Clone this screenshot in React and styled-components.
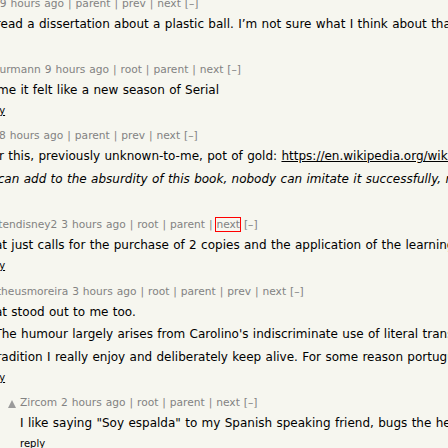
import React from "react";
import styled, { createGlobalStyle } from "styled-components";

const GlobalStyle = createGlobalStyle`
  html, body {
    margin: 0;
    padding: 0;
    width: 448px;
    height: 448px;
    overflow: hidden;
    background: #f6f6ef;
  }
  body {
    font-family: "DejaVu Sans", Verdana, "Noto Sans", sans-serif;
    word-spacing: 0.034em;
  }
`;

const Thread = styled.div`
  display: flex;
  flex-direction: column;
  margin: -3px 0 0 -116px;
`;

const CommentRow = styled.div`
  display: flex;
  align-items: flex-start;
  padding-left: ${(p) => p.$level * 40}px;
  padding-bottom: 9.5px;
  white-space: nowrap;
`;

const VoteCell = styled.div`
  flex: none;
  width: 16px;
  display: flex;
  justify-content: center;
  padding-top: 3px;
`;

const Content = styled.div`
  display: flex;
  flex-direction: column;
`;

const Comhead = styled.div`
  font-size: 8pt;
  line-height: 14px;
  height: 14px;
  color: #828282;
`;

const HeadLink = styled.a`
  color: #828282;
  text-decoration: none;
  outline: ${(p) => (p.$focused ? "1px solid #f00" : "none")};
`;

const CommText = styled.div`
  margin-top: 2px;
  font-size: 12px;
  line-height: 22.7px;
  color: #000;
`;

const Para = styled.div`
  font-style: ${(p) => (p.$italic ? "italic" : "normal")};
`;

const TextLink = styled.a`
  color: #000;
  text-decoration: underline;
`;

const Reply = styled.div`
  font-size: 10px;
  line-height: 18px;
  height: 18px;
`;

const ReplyLink = styled.a`
  color: #000;
  text-decoration: underline;
`;

const Arrow = () => (
  <svg width="10" height="10" viewBox="0 0 10 10" aria-hidden="true">
    <polygon points="5,1 9,9 1,9" fill="#9a9a9a" />
  </svg>
);

const comments = [
  {
    level: 1,
    user: "mikewarot",
    age: "9 hours ago",
    navs: ["parent", "prev", "next"],
    paras: [
      { text: "So I also read a dissertation about a plastic ball. I’m not sure what I think about that." },
    ],
  },
  {
    level: 2,
    user: "Schurmann",
    age: "9 hours ago",
    navs: ["root", "parent", "next"],
    paras: [{ text: "To me it felt like a new season of Serial" }],
  },
  {
    level: 1,
    user: "mikeweiss",
    age: "8 hours ago",
    navs: ["parent", "prev", "next"],
    paras: [
      {
        text: "Thanks for this, previously unknown-to-me, pot of gold: ",
        link: "https://en.wikipedia.org/wiki/English_as_She_Is_Spoke",
      },
      {
        italic: true,
        text: "“Nothing can add to the absurdity of this book, nobody can imitate it successfully, nobody can hope to equal it.”",
      },
    ],
  },
  {
    level: 2,
    user: "waltendisney2",
    age: "3 hours ago",
    navs: ["root", "parent", "next"],
    focused: "next",
    paras: [
      { text: "That just calls for the purchase of 2 copies and the application of the learnings therein." },
    ],
  },
  {
    level: 2,
    user: "matheusmoreira",
    age: "3 hours ago",
    navs: ["root", "parent", "prev", "next"],
    paras: [
      { text: "That stood out to me too." },
      { text: "> The humour largely arises from Carolino's indiscriminate use of literal translations of Portuguese idioms." },
      { text: "a tradition I really enjoy and deliberately keep alive. For some reason portuguese speakers find it hilarious." },
    ],
  },
  {
    level: 3,
    user: "Zircom",
    age: "2 hours ago",
    navs: ["root", "parent", "next"],
    paras: [
      { text: "I like saying \"Soy espalda\" to my Spanish speaking friend, bugs the hell out of them." },
    ],
  },
];

const Comment = ({ c }) => (
  <CommentRow $level={c.level}>
    <VoteCell>
      <Arrow />
    </VoteCell>
    <Content>
      <Comhead>
        <HeadLink href="#">{c.user}</HeadLink> <HeadLink href="#">{c.age}</HeadLink>
        {c.navs.map((n) => (
          <React.Fragment key={n}>
            {" | "}
            <HeadLink href="#" $focused={c.focused === n}>
              {n}
            </HeadLink>
          </React.Fragment>
        ))}{" "}
        <HeadLink href="#">[–]</HeadLink>
      </Comhead>
      <CommText>
        {c.paras.map((p, i) => (
          <Para key={i} $italic={p.italic}>
            {p.text}
            {p.link && <TextLink href="#">{p.link}</TextLink>}
          </Para>
        ))}
      </CommText>
      <Reply>
        <ReplyLink href="#">reply</ReplyLink>
      </Reply>
    </Content>
  </CommentRow>
);

export default function App() {
  return (
    <>
      <GlobalStyle />
      <Thread>
        {comments.map((c, i) => (
          <Comment key={i} c={c} />
        ))}
      </Thread>
    </>
  );
}
